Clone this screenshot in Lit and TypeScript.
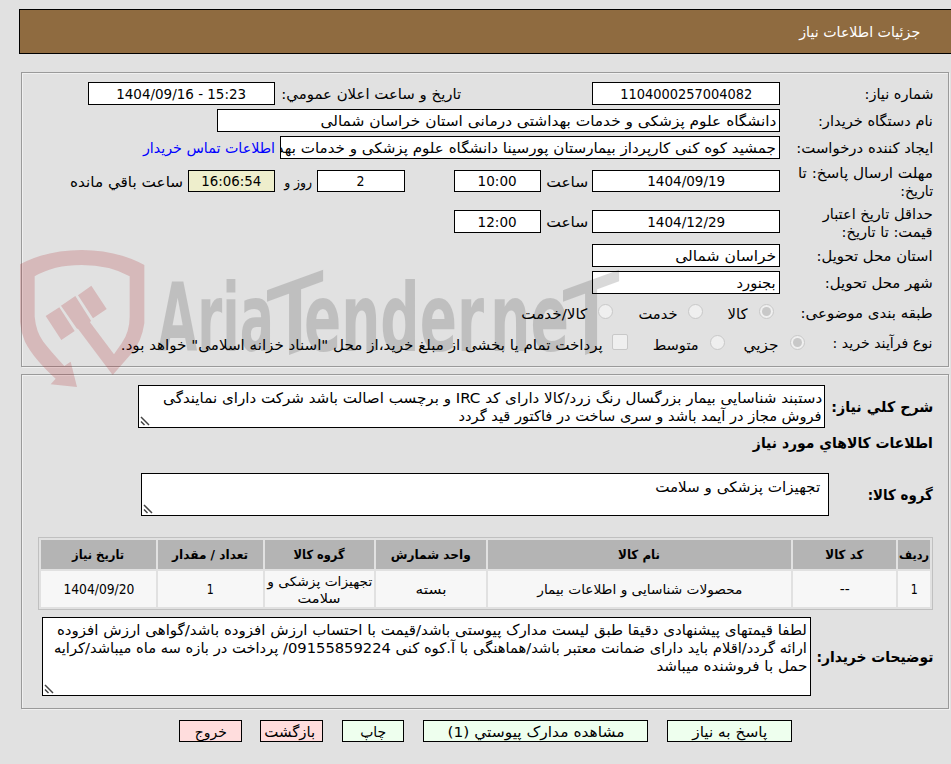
import { LitElement, html, svg, css } from "lit";
import { customElement, property } from "lit/decorators.js";

/* One line of text, stretched or condensed horizontally to a given measure. */
@customElement("fit-text")
class FitText extends LitElement {
  @property({ type: Number }) w = 0;
  @property() text = "";

  static styles = css`
    :host { display: inline-block; flex: none; white-space: pre; line-height: 18px; height: 18px; text-align: right; }
    .box { display: flex; justify-content: flex-start; direction: rtl; }
    .ink { display: inline-block; flex: none; transform-origin: 100% 50%; }
  `;

  render() {
    return html`<div class="box"><span class="ink">${this.text}</span></div>`;
  }

  updated() {
    this.style.width = this.w + "px";
    const ink = this.renderRoot.querySelector(".ink") as HTMLElement;
    ink.style.transform = "none";
    const natural = ink.getBoundingClientRect().width;
    if (natural > 0) ink.style.transform = `scaleX(${this.w / natural})`;
  }
}

const t = (text: string, w: number) =>
  html`<fit-text class=${/^[\u200e\d:\/ -]+$/.test(text) ? "num" : "txt"} .text=${text} .w=${w}></fit-text>`;
const grip = html`<svg class="grip" width="10" height="10" viewBox="0 0 10 10"><path d="M1 1L9 9M1 5.5L4.5 9" /></svg>`;

const columns = [
  { head: ["ردیف", 30], cell: [["1", 7]] },
  { head: ["کد کالا", 38], cell: [["--", 10]] },
  { head: ["نام کالا", 42], cell: [["محصولات شناسایی و اطلاعات بیمار", 205]] },
  { head: ["واحد شمارش", 80], cell: [["بسته", 31]] },
  { head: ["گروه کالا", 51], cell: [["تجهیزات پزشکی و", 105], ["سلامت", 43]] },
  { head: ["تعداد / مقدار", 76], cell: [["1", 7]] },
  { head: ["تاریخ نیاز", 52], cell: [["1404/09/20", 71]] },
] as { head: [string, number]; cell: [string, number][] }[];

@customElement("app-root")
class AppRoot extends LitElement {
  static styles = css`
    :host {
      display: block; position: relative; box-sizing: border-box; width: 951px; height: 764px; overflow: hidden;
      background: #e1e1e1; color: #000; direction: rtl;
      font: 14.4px/18px "DejaVu Sans Condensed", "DejaVu Sans", sans-serif; font-stretch: condensed;
    }
    * { box-sizing: border-box; }
    .num { font-size: 14.9px; }
    .title {
      height: 45px; margin: 9px 0 0 0; margin-left: 19px; border: 1px solid #000; border-right: 0;
      background: #8f6b40; color: #fff; display: flex; align-items: center; padding-right: 31px;
    }
    .panel {
      width: 928px; margin-right: 2px; border: 1px solid #9a9a9a; padding: 9px 15px 0 0;
      box-shadow: 1px 1px 0 #f0f0f0, inset 1px 1px 0 #f0f0f0;
    }
    .need { height: 295px; margin-top: 18px; display: flex; flex-direction: column; gap: 4px; }
    .goods { height: 335px; margin-top: 7px; padding-top: 10px; }
    .row { display: flex; align-items: center; height: 23px; flex: none; }
    .row.deadline { height: 37px; }
    .row.validity { height: 36px; }
    .row.subject { height: 26px; }
    .row.process { height: 28px; }
    .label { width: 153px; flex: none; display: flex; flex-direction: column; align-items: flex-start; }
    .validity .label, .process .label { padding-top: 2px; }
    .subject .label { padding-top: 3px; }
    .field {
      height: 23px; border: 1px solid #000; background: #fff; flex: none; overflow: hidden;
      display: flex; align-items: center; justify-content: center;
    }
    .field.start { justify-content: flex-start; padding-right: 3px; }
    .deadline .field { height: 22px; align-self: flex-start; margin-top: 7px; }
    .validity .field { align-self: flex-start; margin-top: 6px; }
    .w188 { width: 188px; } .w187 { width: 187px; } .w563 { width: 563px; } .w500 { width: 500px; }
    .w87 { width: 87px; } .w88 { width: 88px; }
    .left { background: #eeeecc; }
    .s4 { margin-right: 4px; } .s5 { margin-right: 5px; } .s6 { margin-right: 6px; } .s9 { margin-right: 9px; }
    .s49 { margin-right: 49px; } .s131 { margin-right: 131px; }
    .link { color: #00f; }
    .radio, .check {
      flex: none; width: 15px; height: 15px; border: 1px solid #c8c8c8; background: #efefef; border-radius: 50%;
      display: flex; align-items: center; justify-content: center;
    }
    .radio.on::after { content: ""; width: 9px; height: 9px; border-radius: 50%; background: #c8c8c8; }
    .check { width: 16px; height: 16px; border-radius: 2px; }
    .option { display: flex; align-items: center; height: 18px; }
    .option fit-text { align-self: flex-start; margin-top: 3px; }
    .subject .o1 { margin-right: 6px; gap: 12px; }
    .subject .o2 { margin-right: 24px; gap: 11px; }
    .subject .o3 { margin-right: 25px; gap: 11px; }
    .process .label { width: 128px; }
    .process .o1 { gap: 11px; }
    .process .o2 { margin-right: 19px; gap: 11px; }
    .process .o3 { margin-right: 25px; gap: 9px; }

    .bold { font-weight: bold; font-size: 14.8px; }
    .line { display: flex; }
    .area { border: 1px solid #000; background: #fff; position: relative; display: flex; flex-direction: column; align-items: flex-start; flex: none; }
    .grip { position: absolute; left: 1px; bottom: 1px; fill: none; stroke: #444; stroke-width: 1.5; }
    .describe { align-items: center; height: 43px; justify-content: space-between; }
    .area.need-text { width: 687px; height: 43px; margin-left: 116px; padding: 3px 2px 0 0; }
    .heading { margin-top: 6px; height: 19px; }
    .group { align-items: center; height: 43px; margin-top: 20px; justify-content: space-between; }
    .area.group-text { width: 688px; height: 43px; margin-left: 119px; padding: 4px 8px 0 0; }
    .table {
      width: 895px; height: 73px; margin-top: 21px; border: 1px solid #c0c0c0; padding: 2px;
      display: grid; grid-template-columns: 32px 103px 303px 110px 109px 105px 115px;
      grid-template-rows: 29px 36px; gap: 2px; font-size: 13px;
    }
    .th, .td { display: flex; flex-direction: column; align-items: center; justify-content: center; }
    .th { background: #b4b4b4; font-weight: bold; font-size: 12.6px; }
    .td { background: #f7f7f7; padding-top: 1px; }
    .td fit-text { margin-bottom: -1px; }
    .td .num { font-size: 13.4px; }
    .notes { align-items: center; height: 79px; margin-top: 7px; justify-content: space-between; }
    .area.notes-text { width: 769px; height: 79px; margin-left: 20px; padding: 3px 3px 0 0; }

    .buttons { display: flex; margin: 11px 159px 0 0; }
    .btn { height: 22px; border: 1px solid #000; background: #efe; display: flex; align-items: center; justify-content: center; flex: none; padding-top: 2px; }
    .btn.red { background: #fdd; }
    .reply { width: 125px; }
    .docs { width: 225px; margin-right: 19px; }
    .print { width: 62px; margin-right: 19px; }
    .back { width: 63px; margin-right: 19px; padding-left: 4px; padding-right: 8px; }
    .exit { width: 63px; margin-right: 18px; }

    .mark { position: absolute; left: 0; top: 0; pointer-events: none; direction: ltr; }
    .mark .shield { fill: #aa191e; fill-opacity: 0.2; }
    .mark .word { opacity: 0.145; font: bold 95px "DejaVu Sans Condensed", "DejaVu Sans", sans-serif; font-stretch: condensed; }
    .mark .wing { font-weight: normal; stroke: #000; stroke-width: 3.6; }
  `;

  private label(...lines: [string, number][]) {
    return html`<div class="label">${lines.map(([s, w]) => t(s, w))}</div>`;
  }

  private option(cls: string, box: string, text: string, w: number) {
    return html`<div class="option ${cls}"><span class=${box}></span>${t(text, w)}</div>`;
  }

  private watermark() {
    const piece = (s: string, x: number, w: number) =>
      svg`<text x=${x} y="351" textLength=${w} lengthAdjust="spacingAndGlyphs">${s}</text>`;
    const slanted = (x: number) =>
      svg`<text class="wing" transform="translate(${x} 351) skewY(-20)" x="-26" y="0" textLength="52" lengthAdjust="spacingAndGlyphs">T</text>`;
    return html`<svg class="mark" width="951" height="764" viewBox="0 0 951 764">
      <g class="shield" transform="translate(0 235) scale(.33333)">
        <path d="M60 88Q140 45 245 45Q350 45 433 90L433 265Q425 320 395 355L338 420L235 283L230 280L183 212L226 183L273 257L270 262L342 358L365 325Q389 290 389 245L389 124Q330 90 245 90Q160 90 104 124L104 245Q108 290 130 320Q155 352 193 393L212 380L231 456L152 448L167 431Q100 370 75 320Q62 290 60 260Z" />
        <path d="M137 243L178 217L224 288L184 315ZM234 181L274 152L320 222L279 250Z" />
      </g>
      <g class="word">
        ${piece("Aria", 158, 116)}${slanted(295)}${piece("ender", 304, 180)}${piece("ne", 490, 79)}${slanted(591)}
      </g>
    </svg>`;
  }

  render() {
    return html`
      <div class="title">${t("جزئیات اطلاعات نیاز", 121)}</div>

      <div class="panel need">
        <div class="row">
          ${this.label(["شماره نیاز:", 69])}
          <div class="field w188">${t("1104000257004082", 132)}</div>
          <div class="s131">${t("تاریخ و ساعت اعلان عمومي:", 180)}</div>
          <div class="field w187 s6">${t("\u200e1404/09/16 - 15:23", 130)}</div>
        </div>
        <div class="row">
          ${this.label(["نام دستگاه خریدار:", 115])}
          <div class="field start w563">${t("دانشگاه علوم پزشکی و خدمات بهداشتی درمانی استان خراسان شمالی", 456)}</div>
        </div>
        <div class="row">
          ${this.label(["ایجاد کننده درخواست:", 137])}
          <div class="field start w500">${t("جمشید کوه کنی کارپرداز بیمارستان پورسینا دانشگاه علوم پزشکی و خدمات بهد", 499)}</div>
          <div class="link s5">${t("اطلاعات تماس خریدار", 132)}</div>
        </div>
        <div class="row deadline">
          ${this.label(["مهلت ارسال پاسخ: تا", 135], ["تاریخ:", 33])}
          <div class="field w188">${t("1404/09/19", 78)}</div>
          <div class="s4">${t("ساعت", 42)}</div>
          <div class="field w87 s5">${t("10:00", 39)}</div>
          <div class="field w88 s49">${t("2", 8)}</div>
          <div class="s5">${t("روز و", 28)}</div>
          <div class="field w87 s9 left">${t("16:06:54", 60)}</div>
          <div class="s5">${t("ساعت باقي مانده", 113)}</div>
        </div>
        <div class="row validity">
          ${this.label(["حداقل تاریخ اعتبار", 110], ["قیمت: تا تاریخ:", 91])}
          <div class="field w188">${t("1404/12/29", 78)}</div>
          <div class="s4">${t("ساعت", 42)}</div>
          <div class="field w87 s5">${t("12:00", 39)}</div>
        </div>
        <div class="row">
          ${this.label(["استان محل تحویل:", 116])}
          <div class="field start w188">${t("خراسان شمالی", 101)}</div>
        </div>
        <div class="row">
          ${this.label(["شهر محل تحویل:", 108])}
          <div class="field start w188">${t("بجنورد", 39)}</div>
        </div>
        <div class="row subject">
          ${this.label(["طبقه بندی موضوعی:", 132])}
          ${this.option("o1", "radio on", "کالا", 20)}
          ${this.option("o2", "radio", "خدمت", 39)}
          ${this.option("o3", "radio", "کالا/خدمت", 66)}
        </div>
        <div class="row process">
          ${this.label(["نوع فرآیند خرید :", 100])}
          ${this.option("o1", "radio on", "جزیي", 35)}
          ${this.option("o2", "radio", "متوسط", 46)}
          ${this.option("o3", "check", 'پرداخت تمام یا بخشی از مبلغ خرید،از محل "اسناد خزانه اسلامی" خواهد بود.', 482)}
        </div>
      </div>

      <div class="panel goods">
        <div class="line describe">
          <div class="bold">${t("شرح کلي نیاز:", 102)}</div>
          <div class="area need-text">
            ${t("دستبند شناسایی بیمار بزرگسال رنگ زرد/کالا دارای کد IRC و برچسب اصالت باشد شرکت دارای نمایندگی", 659)}
            ${t("فروش مجاز در آیمد باشد و سری ساخت در فاکتور قید گردد", 363)}
            ${grip}
          </div>
        </div>
        <div class="heading bold">${t("اطلاعات کالاهاي مورد نیاز", 180)}</div>
        <div class="line group">
          <div class="bold">${t("گروه کالا:", 65)}</div>
          <div class="area group-text">${t("تجهیزات پزشکی و سلامت", 165)}${grip}</div>
        </div>
        <div class="table">
          ${columns.map((c) => html`<div class="th">${t(c.head[0], c.head[1])}</div>`)}
          ${columns.map((c) => html`<div class="td">${c.cell.map(([s, w]) => t(s, w))}</div>`)}
        </div>
        <div class="line notes">
          <div class="bold">${t("توضیحات خریدار:", 117)}</div>
          <div class="area notes-text">
            ${t("لطفا قیمتهای پیشنهادی دقیقا طبق لیست مدارک پیوستی باشد/قیمت با احتساب ارزش افزوده باشد/گواهی ارزش افزوده", 750)}
            ${t("ارائه گردد/اقلام باید دارای ضمانت معتبر باشد/هماهنگی با آ.کوه کنی 09155859224/ پرداخت در بازه سه ماه میباشد/کرایه", 753)}
            ${t("حمل با فروشنده میباشد", 151)}
            ${grip}
          </div>
        </div>
      </div>

      <div class="buttons">
        <div class="btn reply">${t("پاسخ به نیاز", 75)}</div>
        <div class="btn docs">${t("مشاهده مدارک پیوستي (1)", 177)}</div>
        <div class="btn print">${t("چاپ", 26)}</div>
        <div class="btn red back">${t("بازگشت", 51)}</div>
        <div class="btn red exit">${t("خروج", 32)}</div>
      </div>
      ${this.watermark()}
    `;
  }
}
